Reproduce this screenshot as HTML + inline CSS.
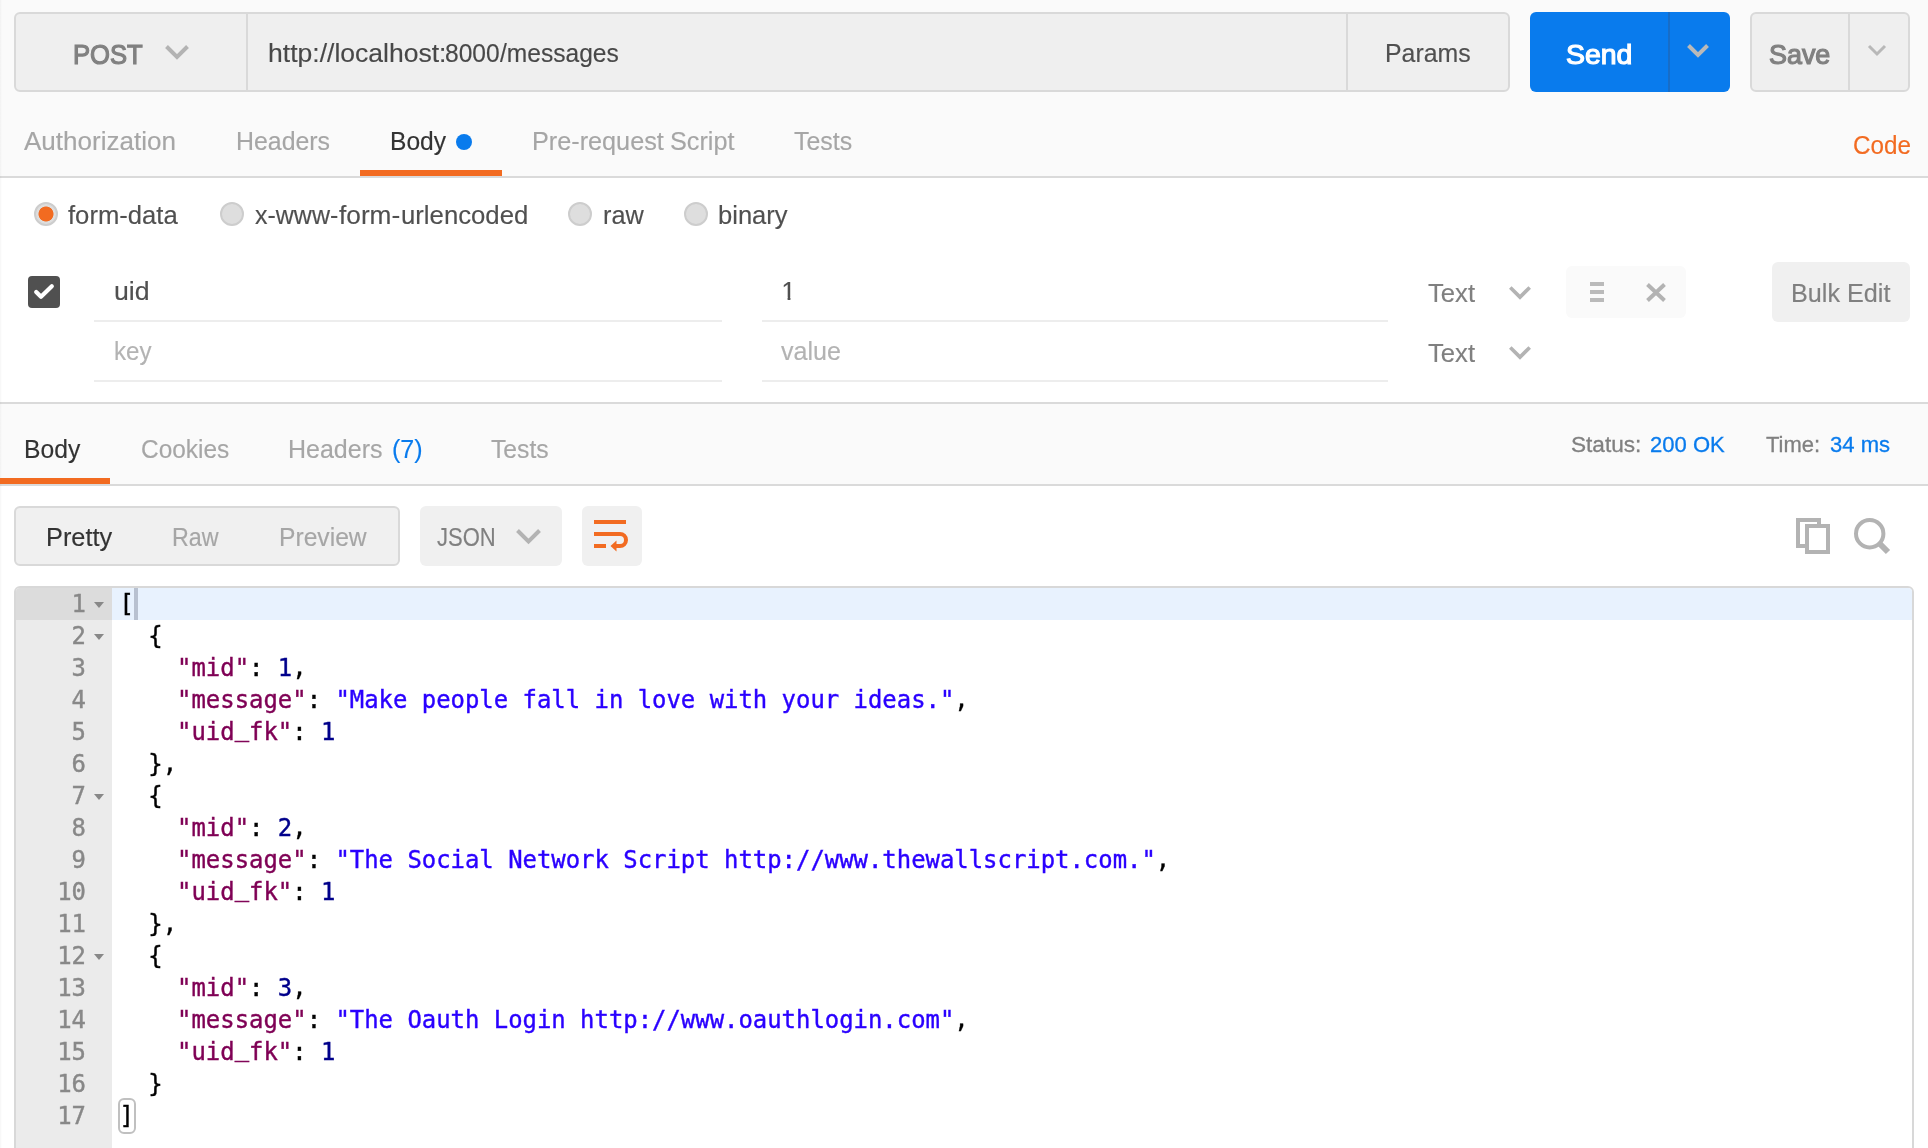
<!DOCTYPE html>
<html lang="en">
<head>
<meta charset="utf-8">
<title>Postman</title>
<style>
html,body{margin:0;padding:0;}
body{width:1928px;height:1148px;overflow:hidden;background:#fff;position:relative;will-change:transform;font-family:"Liberation Sans", sans-serif;}
.a{position:absolute;box-sizing:border-box;}
.t{-webkit-text-stroke:0.15px;position:absolute;white-space:pre;font-family:"Liberation Sans", sans-serif;transform-origin:0 0;line-height:40px;}
svg{position:absolute;overflow:visible;}
/* bands */
#band1{left:0;top:0;width:1928px;height:176px;background:#fafafa;}
#line1{left:0;top:176px;width:1928px;height:2px;background:#dadada;}
#line2{left:0;top:402px;width:1928px;height:2px;background:#dadada;}
#band2{left:0;top:404px;width:1928px;height:80px;background:#fafafa;}
#line3{left:0;top:484px;width:1928px;height:2px;background:#dadada;}
#edge{left:0;top:0;width:2px;height:1148px;background:linear-gradient(90deg,rgba(0,0,0,.035),rgba(0,0,0,0));}
/* url bar */
#url{left:14px;top:12px;width:1496px;height:80px;background:#efefef;border:2px solid #d9d9d9;border-radius:6px;}
.vd{width:2px;background:#d9d9d9;}
#send{left:1530px;top:12px;width:200px;height:80px;background:#097bed;border-radius:6px;}
#save{left:1750px;top:12px;width:160px;height:80px;background:#efefef;border:2px solid #d9d9d9;border-radius:6px;}
/* tabs */
.ul{background:#f26b21;height:6px;}
/* radios */
.rd{width:24px;height:24px;border-radius:50%;background:#dedede;border:2px solid #cdcdcd;}
.rd.on{background:radial-gradient(circle at 50% 50%,#f26b21 7.1px,#dedede 7.9px);}
.hl{height:2px;background:#ededed;}
#cb{left:28px;top:276px;width:32px;height:32px;border-radius:4px;background:#505050;}
#icons{left:1566px;top:266px;width:120px;height:52px;border-radius:6px;background:#fafafa;}
#bulk{left:1772px;top:262px;width:138px;height:60px;border-radius:6px;background:#f0f0f0;}
#seg{left:14px;top:506px;width:386px;height:60px;border-radius:6px;background:#f0f0f0;border:2px solid #d9d9d9;}
#json{left:420px;top:506px;width:142px;height:60px;border-radius:6px;background:#f0f0f0;}
#wrap{left:582px;top:506px;width:60px;height:60px;border-radius:6px;background:#f0f0f0;}
/* editor */
#ed{left:14px;top:586px;width:1900px;height:580px;border:2px solid #d8d8d8;border-radius:6px 6px 0 0;overflow:hidden;background:#fff;}
#gut{left:0;top:0;width:96px;height:580px;background:#ebebeb;}
#codes{left:96px;top:0;width:1800px;height:580px;}
.gl,.cl{-webkit-text-stroke:0.4px;height:32px;line-height:32px;font-family:"DejaVu Sans Mono", "Liberation Mono", monospace;font-size:23.92px;white-space:pre;position:relative;}
.gl{color:#888;}
.gl.act{background:#dcdcdc;}
.cl.act{background:#e8f2fe;}
.cl{padding-left:7.5px;color:#000;}
.ln{position:absolute;right:26px;top:0;}
.fa{position:absolute;left:78px;top:14px;width:0;height:0;border-left:5px solid transparent;border-right:5px solid transparent;border-top:6px solid #888;}
.k{color:#7f0055;}.u{position:relative;top:-4px;}.s{color:#2a00ff;}.n{color:#00008b;}.p{color:#000;}
</style>
</head>
<body>
<div class="a" id="band1"></div><div class="a" id="line1"></div>
<div class="a" id="line2"></div><div class="a" id="band2"></div><div class="a" id="line3"></div>
<div class="a" id="edge"></div>

<section id="request-bar"><!-- request bar -->
<div class="a" id="url"></div>
<div class="a vd" style="left:246px;top:14px;height:76px;"></div>
<div class="a vd" style="left:1346px;top:14px;height:76px;"></div>
<svg style="left:165px;top:45px" width="24" height="15" viewBox="0 0 24 15"><path d="M1.5 1.5 L12 12 L22.5 1.5" fill="none" stroke="#b3b3b3" stroke-width="4"/></svg>
<div class="a" id="send"></div>
<div class="a" style="left:1668px;top:12px;width:2px;height:80px;background:#176dc8;"></div>
<svg style="left:1687px;top:44px" width="22" height="14" viewBox="0 0 22 14"><path d="M1.5 1.5 L11 11 L20.5 1.5" fill="none" stroke="#b9b9b9" stroke-width="4"/></svg>
<div class="a" id="save"></div>
<div class="a vd" style="left:1848px;top:14px;height:76px;"></div>
<svg style="left:1868px;top:45px" width="18" height="11" viewBox="0 0 18 11"><path d="M1 1 L9 9 L17 1" fill="none" stroke="#b8b8b8" stroke-width="3"/></svg>
<span class="t" style="left:72.77px;top:35px;font-size:28px;color:#808080;transform:scaleX(0.9146);-webkit-text-stroke:1.2px;">POST</span>
<span class="t" style="left:267.98px;top:33px;font-size:26px;color:#484848;transform:scaleX(1.0207);">http://localhost:</span><span class="t" style="left:445.15px;top:33px;font-size:26px;color:#484848;transform:scaleX(0.9454);">8000</span><span class="t" style="left:500.0px;top:33px;font-size:26px;color:#484848;transform:scaleX(0.9449);">/messages</span>
<span class="t" style="left:1385.06px;top:33px;font-size:25.6px;color:#505050;transform:scaleX(0.9721);">Params</span>
<span class="t" style="left:1566.08px;top:35px;font-size:28px;color:#ffffff;transform:scaleX(1.0156);-webkit-text-stroke:1.2px;">Send</span>
<span class="t" style="left:1769.14px;top:35px;font-size:28px;color:#808080;transform:scaleX(0.9607);-webkit-text-stroke:1.2px;">Save</span>
</section>
<nav id="request-tabs"><!-- request tabs -->
<div class="a ul" style="left:360px;top:170px;width:142px;"></div>
<div class="a" style="left:456px;top:134px;width:16px;height:16px;border-radius:50%;background:#097bed;"></div>
<span class="t" style="left:24.0px;top:121px;font-size:25.2px;color:#a6a6a6;transform:scaleX(1.0342);">Authorization</span>
<span class="t" style="left:236.02px;top:121px;font-size:25.2px;color:#a6a6a6;transform:scaleX(0.988);">Headers</span>
<span class="t" style="left:389.55px;top:121px;font-size:25.2px;color:#333333;transform:scaleX(0.9764);">Body</span>
<span class="t" style="left:532.0px;top:121px;font-size:25.2px;color:#a6a6a6;transform:scaleX(1.0016);">Pre-request </span><span class="t" style="left:669.5px;top:121px;font-size:25.2px;color:#a6a6a6;transform:scaleX(1.0018);">Script</span>
<span class="t" style="left:794.0px;top:121px;font-size:25.2px;color:#a6a6a6;transform:scaleX(0.9881);">Tests</span>
<span class="t" style="left:1852.54px;top:125px;font-size:25.2px;color:#f26b21;transform:scaleX(0.9621);">Code</span>
</nav>
<section id="body-type"><!-- body type radios -->
<div class="a rd on" style="left:34px;top:202px;"></div>
<div class="a rd" style="left:220px;top:202px;"></div>
<div class="a rd" style="left:568px;top:202px;"></div>
<div class="a rd" style="left:684px;top:202px;"></div>
<span class="t" style="left:68.3px;top:195px;font-size:25.2px;color:#505050;transform:scaleX(1.0177);">form-data</span>
<span class="t" style="left:254.6px;top:195px;font-size:25.2px;color:#505050;transform:scaleX(0.9922);">x-www-</span><span class="t" style="left:338.9px;top:195px;font-size:25.2px;color:#505050;transform:scaleX(1.0415);">form-</span><span class="t" style="left:401.08px;top:195px;font-size:25.2px;color:#505050;transform:scaleX(1.021);">urlencoded</span>
<span class="t" style="left:602.5px;top:195px;font-size:25.2px;color:#505050;transform:scaleX(1.0026);">raw</span>
<span class="t" style="left:718.49px;top:195px;font-size:25.2px;color:#505050;transform:scaleX(1.0146);">binary</span>
</section>
<section id="form-data-rows"><!-- form rows -->
<div class="a" id="cb"></div>
<svg style="left:28px;top:276px" width="32" height="32" viewBox="0 0 32 32"><path d="M8.2 16 L13 20.8 L23.8 10.3" fill="none" stroke="#fff" stroke-width="4.2" stroke-linecap="round" stroke-linejoin="round"/></svg>
<div class="a hl" style="left:94px;top:320px;width:628px;"></div>
<div class="a hl" style="left:762px;top:320px;width:626px;"></div>
<div class="a hl" style="left:94px;top:380px;width:628px;"></div>
<div class="a hl" style="left:762px;top:380px;width:626px;"></div>
<svg style="left:1509px;top:286px" width="22" height="14" viewBox="0 0 22 14"><path d="M1.3 1.4 L11 11.1 L20.7 1.4" fill="none" stroke="#b3b3b3" stroke-width="3.6"/></svg>
<svg style="left:1509px;top:346px" width="22" height="14" viewBox="0 0 22 14"><path d="M1.3 1.4 L11 11.1 L20.7 1.4" fill="none" stroke="#b3b3b3" stroke-width="3.6"/></svg>
<div class="a" id="icons"></div>
<svg style="left:1590px;top:282px" width="14" height="20" viewBox="0 0 14 20"><path d="M0 2h14M0 10h14M0 18h14" fill="none" stroke="#bababa" stroke-width="4"/></svg>
<svg style="left:1646px;top:282.5px" width="20" height="19" viewBox="0 0 20 19"><path d="M1.5 1.5 L18.5 17.5 M18.5 1.5 L1.5 17.5" fill="none" stroke="#b3b3b3" stroke-width="4"/></svg>
<div class="a" id="bulk"></div>
<span class="t" style="left:113.94px;top:271px;font-size:25.2px;color:#505050;transform:scaleX(1.06);">uid</span>
<span class="t" style="left:781.5px;top:271px;font-size:25.2px;color:#505050;transform:scaleX(1.0);clip-path:polygon(0 0,100% 0,100% 26.6px,8.9px 26.6px,8.9px 100%,6.1px 100%,6.1px 26.6px,0 26.6px);">1</span>
<span class="t" style="left:114.04px;top:331px;font-size:25.2px;color:#b3b3b3;transform:scaleX(0.9585);">key</span>
<span class="t" style="left:781.0px;top:331px;font-size:25.2px;color:#b3b3b3;transform:scaleX(0.9965);">value</span>
<span class="t" style="left:1428.4px;top:273px;font-size:25.2px;color:#808080;transform:scaleX(1.0196);">Text</span>
<span class="t" style="left:1428.4px;top:333px;font-size:25.2px;color:#808080;transform:scaleX(1.0196);">Text</span>
<span class="t" style="left:1791.01px;top:273px;font-size:25.2px;color:#808080;transform:scaleX(0.9959);">Bulk Edit</span>
</section>
<nav id="response-tabs"><!-- response tabs -->
<div class="a ul" style="left:0;top:478px;width:110px;"></div>
<span class="t" style="left:24.04px;top:429px;font-size:25.2px;color:#333333;transform:scaleX(0.98);">Body</span>
<span class="t" style="left:140.73px;top:429px;font-size:25.2px;color:#a6a6a6;transform:scaleX(0.9698);">Cookies</span>
<span class="t" style="left:287.82px;top:429px;font-size:25.2px;color:#a6a6a6;transform:scaleX(0.9923);">Headers</span>
<span class="t" style="left:391.7px;top:429px;font-size:25.2px;color:#097bed;transform:scaleX(0.9966);">(7)</span>
<span class="t" style="left:490.6px;top:429px;font-size:25.2px;color:#a6a6a6;transform:scaleX(0.9812);">Tests</span>
<span class="t" style="left:1571.17px;top:425px;font-size:22px;color:#808080;transform:scaleX(1.0276);-webkit-text-stroke:0.3px;">Status:</span>
<span class="t" style="left:1650.4px;top:425px;font-size:22px;color:#097bed;transform:scaleX(1.0023);-webkit-text-stroke:0.3px;">200 OK</span>
<span class="t" style="left:1765.5px;top:425px;font-size:22px;color:#808080;transform:scaleX(0.9987);-webkit-text-stroke:0.3px;">Time:</span>
<span class="t" style="left:1830.0px;top:425px;font-size:22px;color:#097bed;transform:scaleX(1.0015);-webkit-text-stroke:0.3px;">34 ms</span>
</nav>
<section id="response-toolbar"><!-- response toolbar -->
<div class="a" id="seg"></div>
<div class="a" id="json"></div>
<svg style="left:516px;top:529px" width="25" height="15" viewBox="0 0 25 15"><path d="M1.5 1.5 L12.5 12.5 L23.5 1.5" fill="none" stroke="#b3b3b3" stroke-width="4"/></svg>
<div class="a" id="wrap"></div>
<svg style="left:594px;top:520px" width="36" height="32" viewBox="0 0 36 32"><path d="M0 2h32M0 14h26a6 6 0 0 1 0 12h-5M0 26h12" fill="none" stroke="#f26b21" stroke-width="4"/><path d="M16.5 26 L22.5 20.5 V31.5 Z" fill="#f26b21"/></svg>
<svg style="left:1796px;top:518px" width="34" height="36" viewBox="0 0 34 36"><rect x="2" y="2" width="21" height="26" fill="none" stroke="#b3b3b3" stroke-width="4"/><rect x="11" y="8" width="21" height="26" fill="#fff" stroke="#b3b3b3" stroke-width="4"/></svg>
<svg style="left:1854px;top:518px" width="36" height="36" viewBox="0 0 36 36"><circle cx="15.7" cy="15.7" r="13.7" fill="none" stroke="#b3b3b3" stroke-width="4"/><path d="M25.5 25.5 L34 34" stroke="#b3b3b3" stroke-width="6" fill="none"/></svg>
<span class="t" style="left:45.99px;top:517px;font-size:25.2px;color:#333333;transform:scaleX(1.0048);">Pretty</span>
<span class="t" style="left:172.15px;top:517px;font-size:25.2px;color:#a6a6a6;transform:scaleX(0.9248);">Raw</span>
<span class="t" style="left:279.04px;top:517px;font-size:25.2px;color:#a6a6a6;transform:scaleX(0.9786);">Preview</span>
<span class="t" style="left:437.3px;top:517px;font-size:25.2px;color:#808080;transform:scaleX(0.8744);">JSON</span>
</section>
<!-- editor -->
<div class="a" id="ed">
<div class="a" id="gut">
<div class="gl act"><span class="ln">1</span><i class="fa"></i></div>
<div class="gl"><span class="ln">2</span><i class="fa"></i></div>
<div class="gl"><span class="ln">3</span></div>
<div class="gl"><span class="ln">4</span></div>
<div class="gl"><span class="ln">5</span></div>
<div class="gl"><span class="ln">6</span></div>
<div class="gl"><span class="ln">7</span><i class="fa"></i></div>
<div class="gl"><span class="ln">8</span></div>
<div class="gl"><span class="ln">9</span></div>
<div class="gl"><span class="ln">10</span></div>
<div class="gl"><span class="ln">11</span></div>
<div class="gl"><span class="ln">12</span><i class="fa"></i></div>
<div class="gl"><span class="ln">13</span></div>
<div class="gl"><span class="ln">14</span></div>
<div class="gl"><span class="ln">15</span></div>
<div class="gl"><span class="ln">16</span></div>
<div class="gl"><span class="ln">17</span></div>
</div>
<div class="a" id="codes">
<div class="cl act"><span class="p">[</span></div>
<div class="cl">  <span class="p">{</span></div>
<div class="cl">    <span class="k">&quot;mid&quot;</span><span class="p">: </span><span class="n">1</span><span class="p">,</span></div>
<div class="cl">    <span class="k">&quot;message&quot;</span><span class="p">: </span><span class="s">&quot;Make people fall in love with your ideas.&quot;</span><span class="p">,</span></div>
<div class="cl">    <span class="k">&quot;uid<span class="u">_</span>fk&quot;</span><span class="p">: </span><span class="n">1</span></div>
<div class="cl">  <span class="p">},</span></div>
<div class="cl">  <span class="p">{</span></div>
<div class="cl">    <span class="k">&quot;mid&quot;</span><span class="p">: </span><span class="n">2</span><span class="p">,</span></div>
<div class="cl">    <span class="k">&quot;message&quot;</span><span class="p">: </span><span class="s">&quot;The Social Network Script http://www.thewallscript.com.&quot;</span><span class="p">,</span></div>
<div class="cl">    <span class="k">&quot;uid<span class="u">_</span>fk&quot;</span><span class="p">: </span><span class="n">1</span></div>
<div class="cl">  <span class="p">},</span></div>
<div class="cl">  <span class="p">{</span></div>
<div class="cl">    <span class="k">&quot;mid&quot;</span><span class="p">: </span><span class="n">3</span><span class="p">,</span></div>
<div class="cl">    <span class="k">&quot;message&quot;</span><span class="p">: </span><span class="s">&quot;The Oauth Login http://www.oauthlogin.com&quot;</span><span class="p">,</span></div>
<div class="cl">    <span class="k">&quot;uid<span class="u">_</span>fk&quot;</span><span class="p">: </span><span class="n">1</span></div>
<div class="cl">  <span class="p">}</span></div>
<div class="cl"><span class="p">]</span></div>
</div>
<div class="a" style="left:118px;top:0;width:4px;height:32px;background:#b8c1d0;"></div>
<div class="a" style="left:102px;top:510px;width:18px;height:36px;border:2px solid #c0c0c0;border-radius:6px;"></div>
</div>

</body>
</html>
